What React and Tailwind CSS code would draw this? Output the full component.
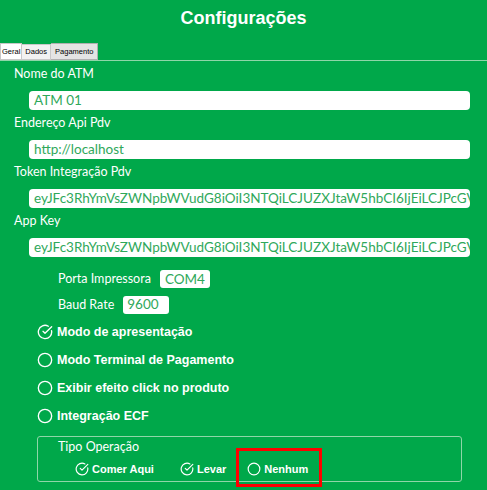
import React from "react";
import { CircleCheckBig, Circle } from "lucide-react";

const TOKEN =
  "eyJFc3RhYmVsZWNpbWVudG8iOiI3NTQiLCJUZXJtaW5hbCI6IjEiLCJPcGVyYXRvciI6IjEyMyJ9";

function Field({ label, value }) {
  return (
    <div className="flex flex-col">
      <div className="h-[26px] pl-[14px] pt-[4px] text-[12.5px] leading-[18px] text-white">{label}</div>
      <div className="ml-[29px] mr-[17px] mt-[4px] h-[19px] overflow-hidden whitespace-nowrap rounded-[4px] bg-white pl-[5px] text-[13.5px] leading-[19px] text-[#2fa85a]">
        {value}
      </div>
    </div>
  );
}

function Option({ checked, label }) {
  const Icon = checked ? CircleCheckBig : Circle;
  return (
    <div className="flex h-[28px] items-center gap-[4px] pl-[37px]">
      <Icon size={16} strokeWidth={2} className="text-white" />
      <span className="font-['Liberation_Sans',Arial,sans-serif] text-[12.5px] font-bold text-white">{label}</span>
    </div>
  );
}

function SmallOption({ checked, label }) {
  const Icon = checked ? CircleCheckBig : Circle;
  return (
    <div className="flex items-center gap-[3px]">
      <Icon size={14} strokeWidth={2} className="text-white" />
      <span className="font-['Liberation_Sans',Arial,sans-serif] text-[11px] font-bold text-white">{label}</span>
    </div>
  );
}

export default function App() {
  return (
    <div className="h-[490px] w-[487px] overflow-hidden bg-[#00a84a] font-['Lato','Open_Sans',sans-serif]">
      <div className="flex h-[36px] items-center justify-center pt-[1px]">
        <h1 className="font-['Liberation_Sans',Arial,sans-serif] text-[18px] font-bold text-white">Configurações</h1>
      </div>

      {/* tab strip */}
      <div className="flex h-[25px] items-end border-b border-[#8fd6a8] pl-0 pt-[7px]">
        <div className="flex h-[17px] items-center border border-[#c8c8c8] bg-white px-[1px] font-['Liberation_Sans',Arial,sans-serif] text-[7.5px] text-black">
          Geral
        </div>
        <div className="flex h-[16px] items-center border border-l-0 border-[#c8c8c8] bg-[#f2f2f2] px-[3px] font-['Liberation_Sans',Arial,sans-serif] text-[7.5px] text-black">
          Dados
        </div>
        <div className="flex h-[17px] items-center border border-l-0 border-[#b0b0b0] bg-[#e4e4e4] px-[4px] pt-[1px] font-['Liberation_Sans',Arial,sans-serif] text-[7.5px] text-black">
          Pagamento
        </div>
      </div>

      <div className="flex flex-col">
        <Field label="Nome do ATM" value="ATM 01" />
        <Field label="Endereço Api Pdv" value="http://localhost" />
        <Field label="Token Integração Pdv" value={TOKEN} />
        <Field label="App Key" value={TOKEN} />
      </div>

      <div className="mt-[13px] flex flex-col gap-[8px] pl-[58px] text-[12.5px] text-white">
        <div className="flex h-[18px] items-center gap-[9px]">
          <span>Porta Impressora</span>
          <span className="rounded-[3px] bg-white px-[5px] text-[13.5px] leading-[18px] text-[#2fa85a]">COM4</span>
        </div>
        <div className="flex h-[18px] items-center gap-[9px]">
          <span>Baud Rate</span>
          <span className="h-[18px] w-[46px] rounded-[3px] bg-white pl-[4px] text-[13.5px] leading-[16px] text-[#2fa85a]">9600</span>
        </div>
      </div>

      <div className="mt-[4px] flex flex-col">
        <Option checked label="Modo de apresentação" />
        <Option label="Modo Terminal de Pagamento" />
        <Option label="Exibir efeito click no produto" />
        <Option label="Integração ECF" />
      </div>

      <div className="ml-[37px] mr-[25px] mt-[6px] h-[46px] rounded-[3px] border border-[#8fd6a8] px-[20px] pt-[1px]">
        <div className="text-[12.5px] leading-[18px] text-white">Tipo Operação</div>
        <div className="mt-[5px] flex items-center pl-[17px]">
          <SmallOption checked label="Comer Aqui" />
          <div className="ml-[26px]">
            <SmallOption checked label="Levar" />
          </div>
          <div className="relative ml-[21px]">
            <SmallOption label="Nenhum" />
            <div className="absolute left-[-11px] top-[-13px] h-[39px] w-[86px] border-[3px] border-[#ff0000]" />
          </div>
        </div>
      </div>
    </div>
  );
}
